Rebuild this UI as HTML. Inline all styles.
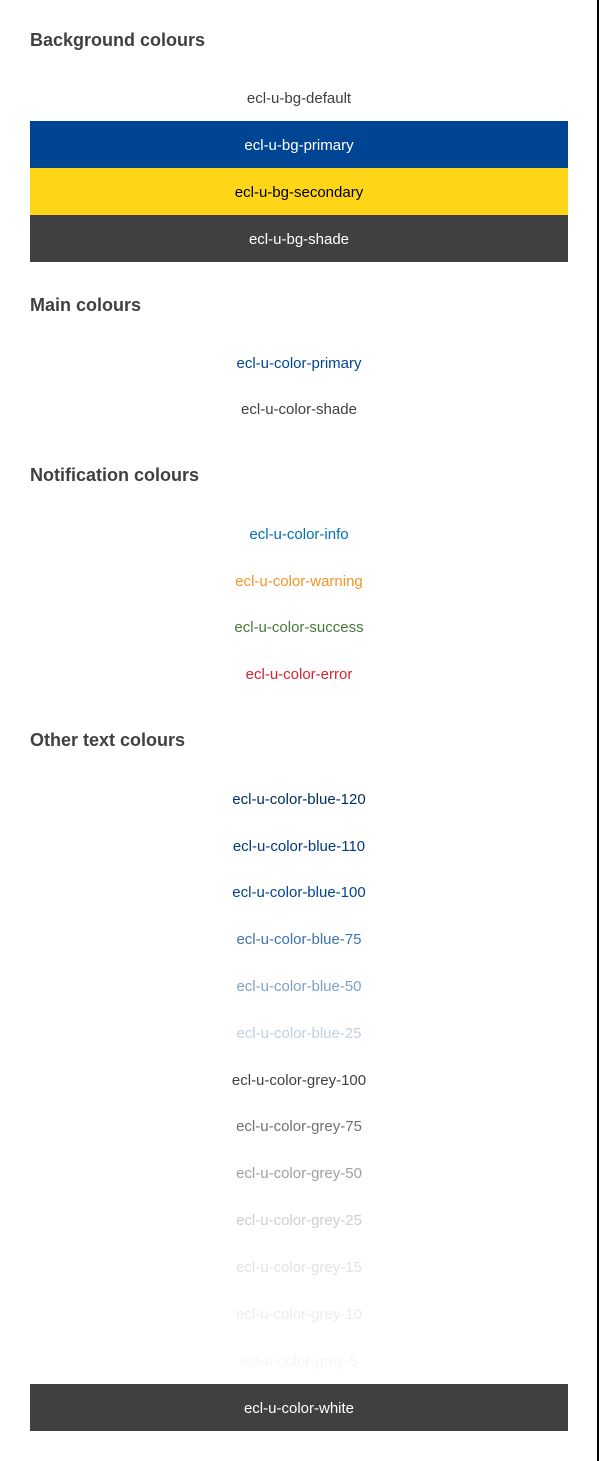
<!DOCTYPE html>
<html><head><style>
body{margin:0;width:600px;height:1461px;background:#fff;font-family:"Liberation Sans",Arial,sans-serif;position:relative;overflow:hidden}
.bar{position:absolute;left:597px;top:0;width:2px;height:1461px;background:#000}
h2{position:absolute;left:30px;margin:0;font-size:18px;font-weight:bold;color:#404040;line-height:20px}
.r{position:absolute;left:30px;width:538px;height:46px;padding-top:1px;line-height:47px;text-align:center;font-size:15px;color:#404040}
</style></head><body>
<div class="bar"></div>
<h2 style="top:30px">Background colours</h2>
<div class="r" style="top:74px">ecl-u-bg-default</div>
<div class="r" style="top:121px;background:#004494;color:#fff">ecl-u-bg-primary</div>
<div class="r" style="top:168px;background:#ffd617;color:#000">ecl-u-bg-secondary</div>
<div class="r" style="top:215px;background:#404040;color:#fff">ecl-u-bg-shade</div>
<h2 style="top:295px">Main colours</h2>
<div class="r" style="top:339px;color:#004494">ecl-u-color-primary</div>
<div class="r" style="top:385px;color:#404040">ecl-u-color-shade</div>
<h2 style="top:465px">Notification colours</h2>
<div class="r" style="top:510px;color:#006fb4">ecl-u-color-info</div>
<div class="r" style="top:557px;color:#f29527">ecl-u-color-warning</div>
<div class="r" style="top:603px;color:#467a39">ecl-u-color-success</div>
<div class="r" style="top:650px;color:#da2131">ecl-u-color-error</div>
<h2 style="top:730px">Other text colours</h2>
<div class="r" style="top:775px;color:#002e63">ecl-u-color-blue-120</div>
<div class="r" style="top:822px;color:#003a7c">ecl-u-color-blue-110</div>
<div class="r" style="top:868px;color:#004494">ecl-u-color-blue-100</div>
<div class="r" style="top:915px;color:#3f73af">ecl-u-color-blue-75</div>
<div class="r" style="top:962px;color:#7fa1c9">ecl-u-color-blue-50</div>
<div class="r" style="top:1009px;color:#bfd0e4">ecl-u-color-blue-25</div>
<div class="r" style="top:1056px;color:#404040">ecl-u-color-grey-100</div>
<div class="r" style="top:1102px;color:#707070">ecl-u-color-grey-75</div>
<div class="r" style="top:1149px;color:#9f9f9f">ecl-u-color-grey-50</div>
<div class="r" style="top:1196px;color:#cfcfcf">ecl-u-color-grey-25</div>
<div class="r" style="top:1243px;color:#e3e3e3">ecl-u-color-grey-15</div>
<div class="r" style="top:1290px;color:#ececec">ecl-u-color-grey-10</div>
<div class="r" style="top:1337px;color:#f5f5f5">ecl-u-color-grey-5</div>
<div class="r" style="top:1384px;background:#404040;color:#fff">ecl-u-color-white</div>
</body></html>
